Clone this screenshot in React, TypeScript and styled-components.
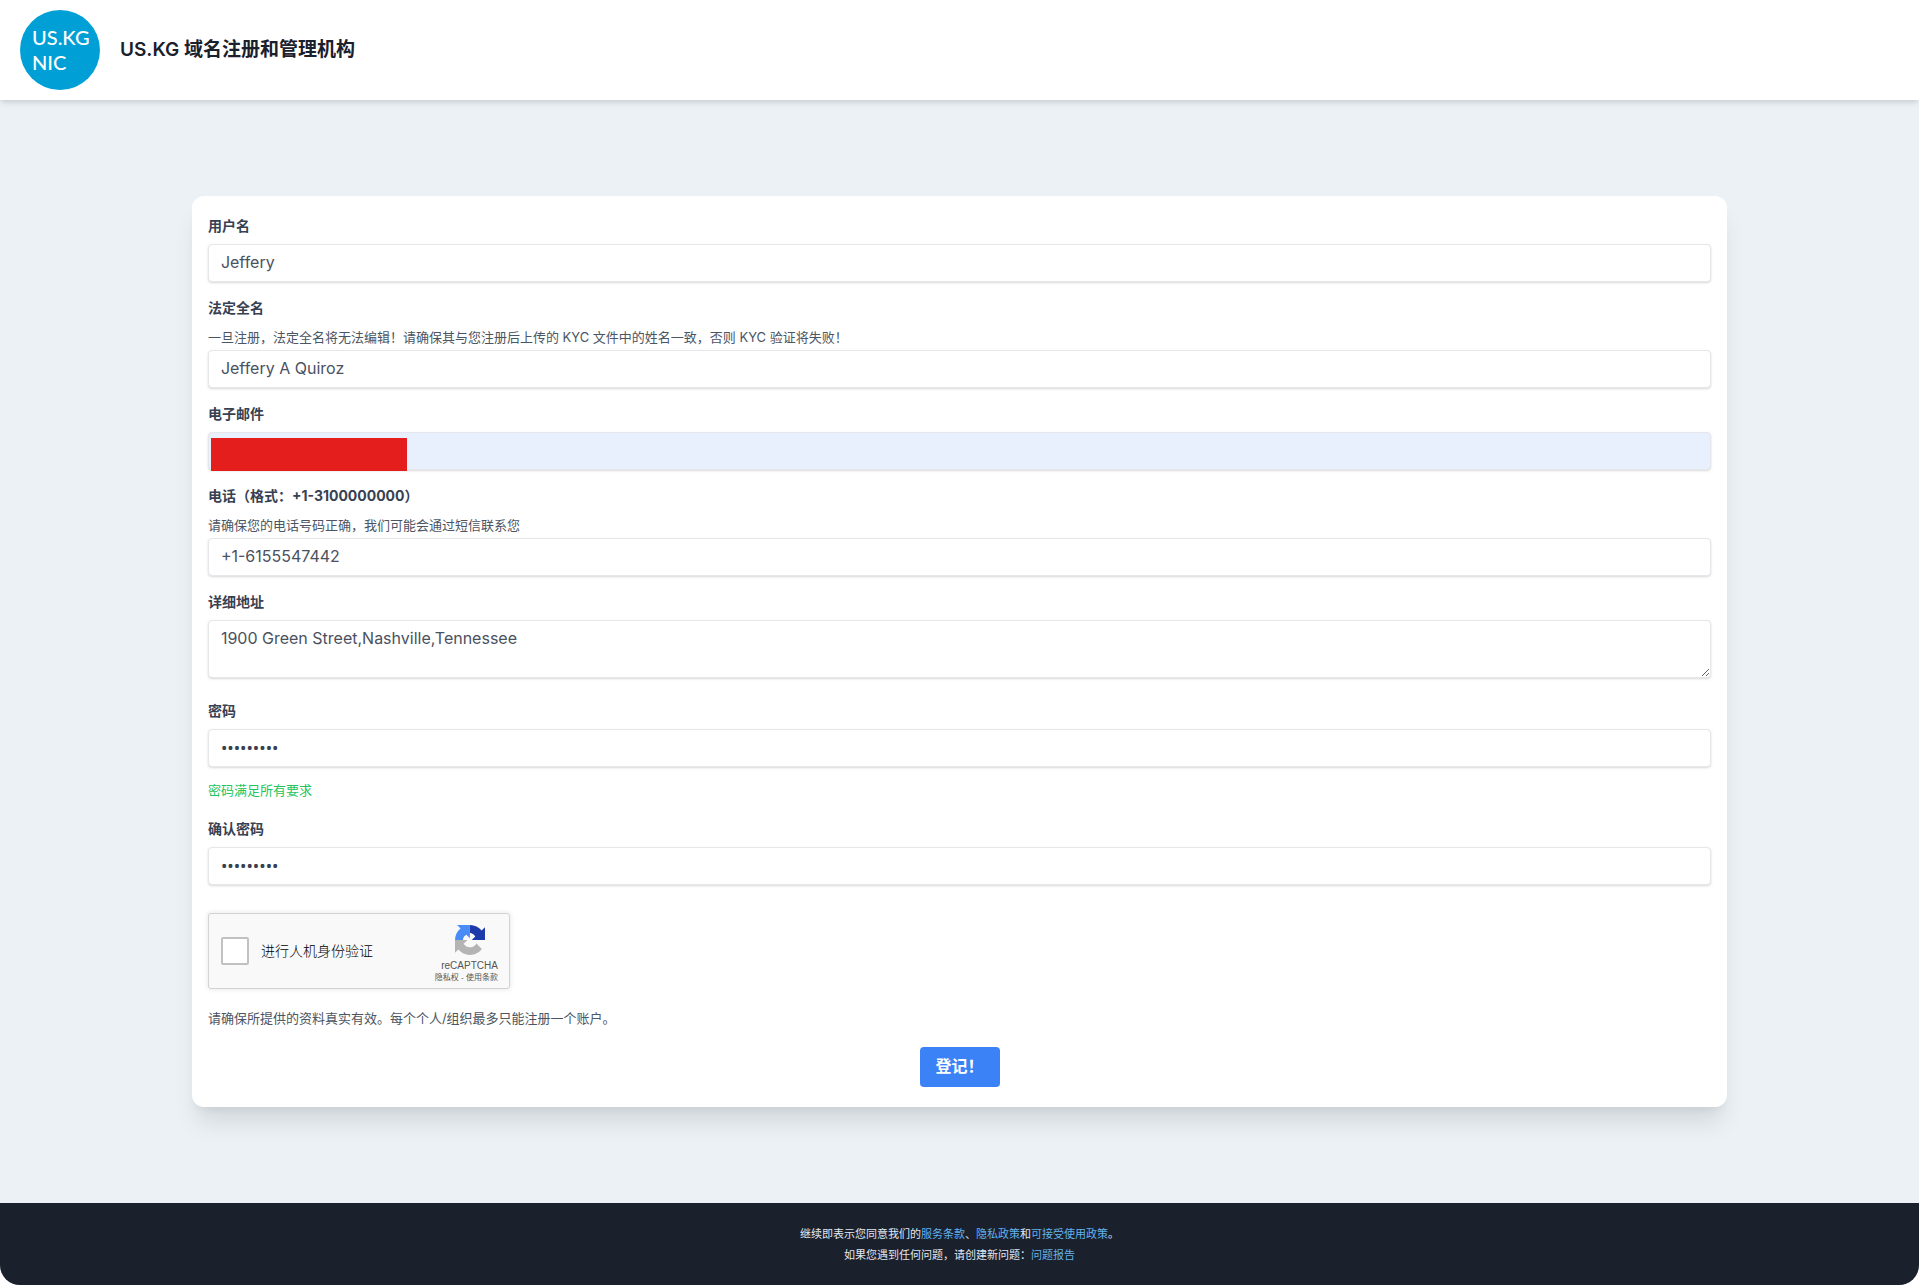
import React, { useState } from "react";
import styled, { createGlobalStyle } from "styled-components";

const GlobalStyle = createGlobalStyle`
  *, *::before, *::after { box-sizing: border-box; }
  body {
    margin: 0;
    background: #ffffff;
    color: #1a202c;
    font-family: Inter, "Noto Sans CJK SC", sans-serif;
  }
  button, input, textarea { font-family: inherit; }
`;

const Page = styled.div`
  display: flex;
  flex-direction: column;
  min-height: 100vh;
  overflow: hidden;
  background: #ebf1f5;
  border-radius: 0 0 20px 20px;
`;

const Header = styled.header`
  display: flex;
  align-items: center;
  gap: 20px;
  padding: 10px 20px;
  background: #ffffff;
  box-shadow: 0 4px 6px -1px rgba(0, 0, 0, 0.1), 0 2px 4px -1px rgba(0, 0, 0, 0.06);
`;

const Logo = styled.div`
  display: flex;
  flex-direction: column;
  justify-content: center;
  width: 80px;
  height: 80px;
  padding-left: 12px;
  border-radius: 50%;
  background: #00a0d6;
  color: #ffffff;
  font-family: Lato, sans-serif;
  font-size: 20px;
  font-weight: 500;
  line-height: 25px;
`;

const Title = styled.h1`
  margin: 0;
  font-size: 19px;
  font-weight: 600;
  line-height: 28px;
`;

const Main = styled.main`
  flex: 1;
  padding: 96px 10%;
`;

const Card = styled.form`
  display: flex;
  flex-direction: column;
  padding: 20px 16px;
  background: #ffffff;
  border-radius: 12px;
  box-shadow: 0 20px 25px -5px rgba(0, 0, 0, 0.1), 0 8px 10px -5px rgba(0, 0, 0, 0.06);
`;

const Field = styled.div<{ $gap?: number }>`
  position: relative;
  display: flex;
  flex-direction: column;
  margin-bottom: ${(p) => p.$gap ?? 16}px;
`;

const Label = styled.label`
  align-self: flex-start;
  margin-bottom: 8px;
  color: #374151;
  font-size: 14px;
  font-weight: 700;
  line-height: 20px;
`;

const Note = styled.p<{ $success?: boolean; $top?: number }>`
  margin: ${(p) => p.$top ?? 0}px 0 0;
  padding-bottom: 2px;
  color: ${(p) => (p.$success ? "#22c55e" : "#4b5563")};
  font-size: 13px;
  line-height: 22px;
`;

const Input = styled.input<{ $filled?: boolean }>`
  width: 100%;
  height: 38px;
  padding: 7px 12px 9px;
  border: 1px solid #e5e7eb;
  border-radius: 4px;
  outline: none;
  background: ${(p) => (p.$filled ? "#e8f0fe" : "#ffffff")};
  box-shadow: 0 1px 3px rgba(0, 0, 0, 0.1), 0 1px 2px rgba(0, 0, 0, 0.06);
  color: #4a5160;
  font-size: 16px;
  line-height: 20px;

  &[type="password"] {
    color: #374151;
    font-family: "Noto Sans", sans-serif;
    font-size: 17px;
  }
`;

const TextArea = styled(Input).attrs({ as: "textarea" })`
  display: block;
  height: 58px;
  resize: both;
`;

const Redaction = styled.span`
  position: absolute;
  left: 3px;
  bottom: -1px;
  width: 196px;
  height: 33px;
  background: #e31e1c;
`;

const Captcha = styled.div`
  display: flex;
  align-items: center;
  width: 302px;
  height: 76px;
  margin-top: 12px;
  margin-bottom: 18px;
  padding: 0 11px 0 12px;
  border: 1px solid #d3d3d3;
  border-radius: 3px;
  background: #f9f9f9;
  box-shadow: 0 0 4px 1px rgba(0, 0, 0, 0.08);
`;

const CaptchaCheck = styled.input`
  appearance: none;
  flex: none;
  width: 28px;
  height: 28px;
  margin: 0;
  border: 2px solid #c1c1c1;
  border-radius: 2px;
  background: #ffffff;
`;

const CaptchaLabel = styled.label`
  flex: 1;
  padding-left: 12px;
  color: #000000;
  font-family: Roboto, "Noto Sans CJK SC", sans-serif;
  font-size: 14px;
  font-weight: 300;
  line-height: 17px;
`;

const CaptchaBrand = styled.div`
  display: flex;
  flex-direction: column;
  align-items: flex-end;
  color: #555555;
  font-family: "Liberation Sans", "Noto Sans CJK SC", sans-serif;
  font-size: 10px;
  line-height: 12px;

  svg { margin: 6px 13px 5px 0; }
`;

const CaptchaTerms = styled.div`
  font-size: 8px;
  line-height: 12px;

  a { color: inherit; text-decoration: none; }
`;

const Submit = styled.button`
  align-self: center;
  width: 80px;
  height: 40px;
  margin-top: 16px;
  padding: 7px 16px 9px;
  border: 0;
  border-radius: 4px;
  background: #3b82f6;
  color: #ffffff;
  font-size: 16px;
  font-weight: 700;
  line-height: 24px;
  text-align: left;
  white-space: nowrap;
`;

const Footer = styled.footer`
  padding: 21px 20px 19px;
  background: #1a202c;
  color: #e2e8f0;
  font-size: 11px;
  line-height: 21px;
  text-align: center;

  p { margin: 0; }
  a { color: #63b3ed; text-decoration: none; }
`;

const CaptchaMark = () => (
  <svg width="30" height="30" viewBox="0 0 64 64" aria-hidden="true">
    <path fill="#1c3aa9" d="M64 31.955a33 33 0 0 0-.037-1.374V4.687l-7.16 7.16C50.945 4.674 42.033.093 32.05.093c-.03 0-.06 0-.09 0v17.15c.96-.01 2.2-.01 3.1.2a11.9 11.9 0 0 1 8.2 6.9l-7.64 7.64z" />
    <path fill="#4a8cf6" d="M31.862.094a33 33 0 0 0-1.373.037H4.594l7.16 7.159C4.58 13.147 0 22.06 0 32.043v.09h17.15c-.01-.96-.01-2.2.2-3.1a11.9 11.9 0 0 1 6.9-8.2l7.64 7.64z" />
    <path fill="#b4b4b4" d="M.001 32.045c.001.46.012.918.037 1.373v25.895l7.159-7.16c5.857 7.173 14.77 11.754 24.753 11.754 10.389 0 19.619-4.961 25.454-12.645L45.668 39.404a15.55 15.55 0 0 1-4.754 5.334c-1.961 1.53-4.739 2.781-8.964 2.781-.51 0-.904-.06-1.194-.172-5.235-.413-9.772-3.302-12.443-7.494l8.307-7.808z" />
  </svg>
);

export default function App() {
  const [form, setForm] = useState({
    username: "Jeffery",
    fullname: "Jeffery A Quiroz",
    email: "",
    phone: "+1-6155547442",
    address: "1900 Green Street,Nashville,Tennessee",
    password: "Nashville",
    confirm: "Nashville",
  });
  const bind = (name: keyof typeof form) => ({
    id: name,
    value: form[name],
    onChange: (e: React.ChangeEvent<any>) => setForm({ ...form, [name]: e.target.value }),
  });

  return (
    <>
      <GlobalStyle />
      <Page lang="zh-CN">
        <Header>
          <Logo>
            <span>US.KG</span>
            <span>NIC</span>
          </Logo>
          <Title>US.KG 域名注册和管理机构</Title>
        </Header>
        <Main>
          <Card onSubmit={(e) => e.preventDefault()}>
            <Field>
              <Label htmlFor="username">用户名</Label>
              <Input type="text" {...bind("username")} />
            </Field>
            <Field>
              <Label htmlFor="fullname">法定全名</Label>
              <Note>一旦注册，法定全名将无法编辑！请确保其与您注册后上传的 KYC 文件中的姓名一致，否则 KYC 验证将失败！</Note>
              <Input type="text" {...bind("fullname")} />
            </Field>
            <Field>
              <Label htmlFor="email">电子邮件</Label>
              <Input type="email" $filled {...bind("email")} />
              <Redaction />
            </Field>
            <Field>
              <Label htmlFor="phone">电话（格式：+1-3100000000）</Label>
              <Note>请确保您的电话号码正确，我们可能会通过短信联系您</Note>
              <Input type="tel" {...bind("phone")} />
            </Field>
            <Field $gap={23}>
              <Label htmlFor="address">详细地址</Label>
              <TextArea {...bind("address")} />
            </Field>
            <Field>
              <Label htmlFor="password">密码</Label>
              <Input type="password" {...bind("password")} />
              <Note $success $top={12}>密码满足所有要求</Note>
            </Field>
            <Field>
              <Label htmlFor="confirm">确认密码</Label>
              <Input type="password" {...bind("confirm")} />
            </Field>
            <Captcha>
              <CaptchaCheck type="checkbox" id="human" />
              <CaptchaLabel htmlFor="human">进行人机身份验证</CaptchaLabel>
              <CaptchaBrand>
                <CaptchaMark />
                <span>reCAPTCHA</span>
                <CaptchaTerms>
                  <a href="#privacy">隐私权</a> - <a href="#terms">使用条款</a>
                </CaptchaTerms>
              </CaptchaBrand>
            </Captcha>
            <Note>请确保所提供的资料真实有效。每个个人/组织最多只能注册一个账户。</Note>
            <Submit type="submit">登记！</Submit>
          </Card>
        </Main>
        <Footer>
          <p>
            继续即表示您同意我们的<a href="#service">服务条款</a>、<a href="#privacy-policy">隐私政策</a>和<a href="#acceptable-use">可接受使用政策</a>。
          </p>
          <p>
            如果您遇到任何问题，请创建新问题：<a href="#issues">问题报告</a>
          </p>
        </Footer>
      </Page>
    </>
  );
}
